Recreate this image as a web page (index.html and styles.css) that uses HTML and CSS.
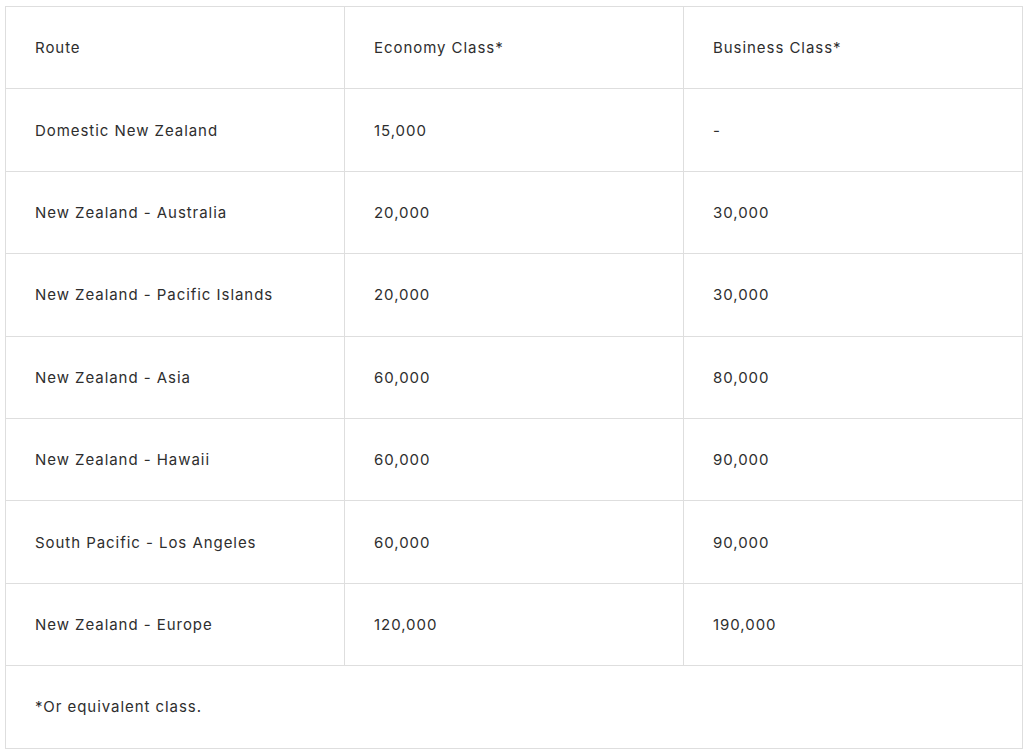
FILE: index.html
```html
<!DOCTYPE html>
<html>
<head>
<meta charset="utf-8">
<link rel="stylesheet" href="styles.css">
</head>
<body>
<table class="fares">
  <thead>
    <tr><th>Route</th><th>Economy Class*</th><th>Business Class*</th></tr>
  </thead>
  <tbody>
    <tr><td>Domestic New Zealand</td><td>15,000</td><td>-</td></tr>
    <tr><td>New Zealand - Australia</td><td>20,000</td><td>30,000</td></tr>
    <tr><td>New Zealand - Pacific Islands</td><td>20,000</td><td>30,000</td></tr>
    <tr><td>New Zealand - Asia</td><td>60,000</td><td>80,000</td></tr>
    <tr><td>New Zealand - Hawaii</td><td>60,000</td><td>90,000</td></tr>
    <tr><td>South Pacific - Los Angeles</td><td>60,000</td><td>90,000</td></tr>
    <tr><td>New Zealand - Europe</td><td>120,000</td><td>190,000</td></tr>
    <tr><td class="note" colspan="3">*Or equivalent class.</td></tr>
  </tbody>
</table>
</body>
</html>
```
FILE: styles.css
```css
html, body {
  margin: 0;
  padding: 0;
  background: #ffffff;
}
body {
  padding: 6px 0 0 5px;
  font-family: "Inter", "Liberation Sans", sans-serif;
  color: #2e2e2e;
}
.fares {
  border-collapse: collapse;
  width: 1018px;
  table-layout: fixed;
  font-size: 15px;
  letter-spacing: 0.95px;
}
.fares th, .fares td {
  border: 1px solid #dedede;
  height: 82.4px;
  padding: 0 0 0 29px;
  text-align: left;
  vertical-align: middle;
  font-weight: 400;
  box-sizing: border-box;
}
```
